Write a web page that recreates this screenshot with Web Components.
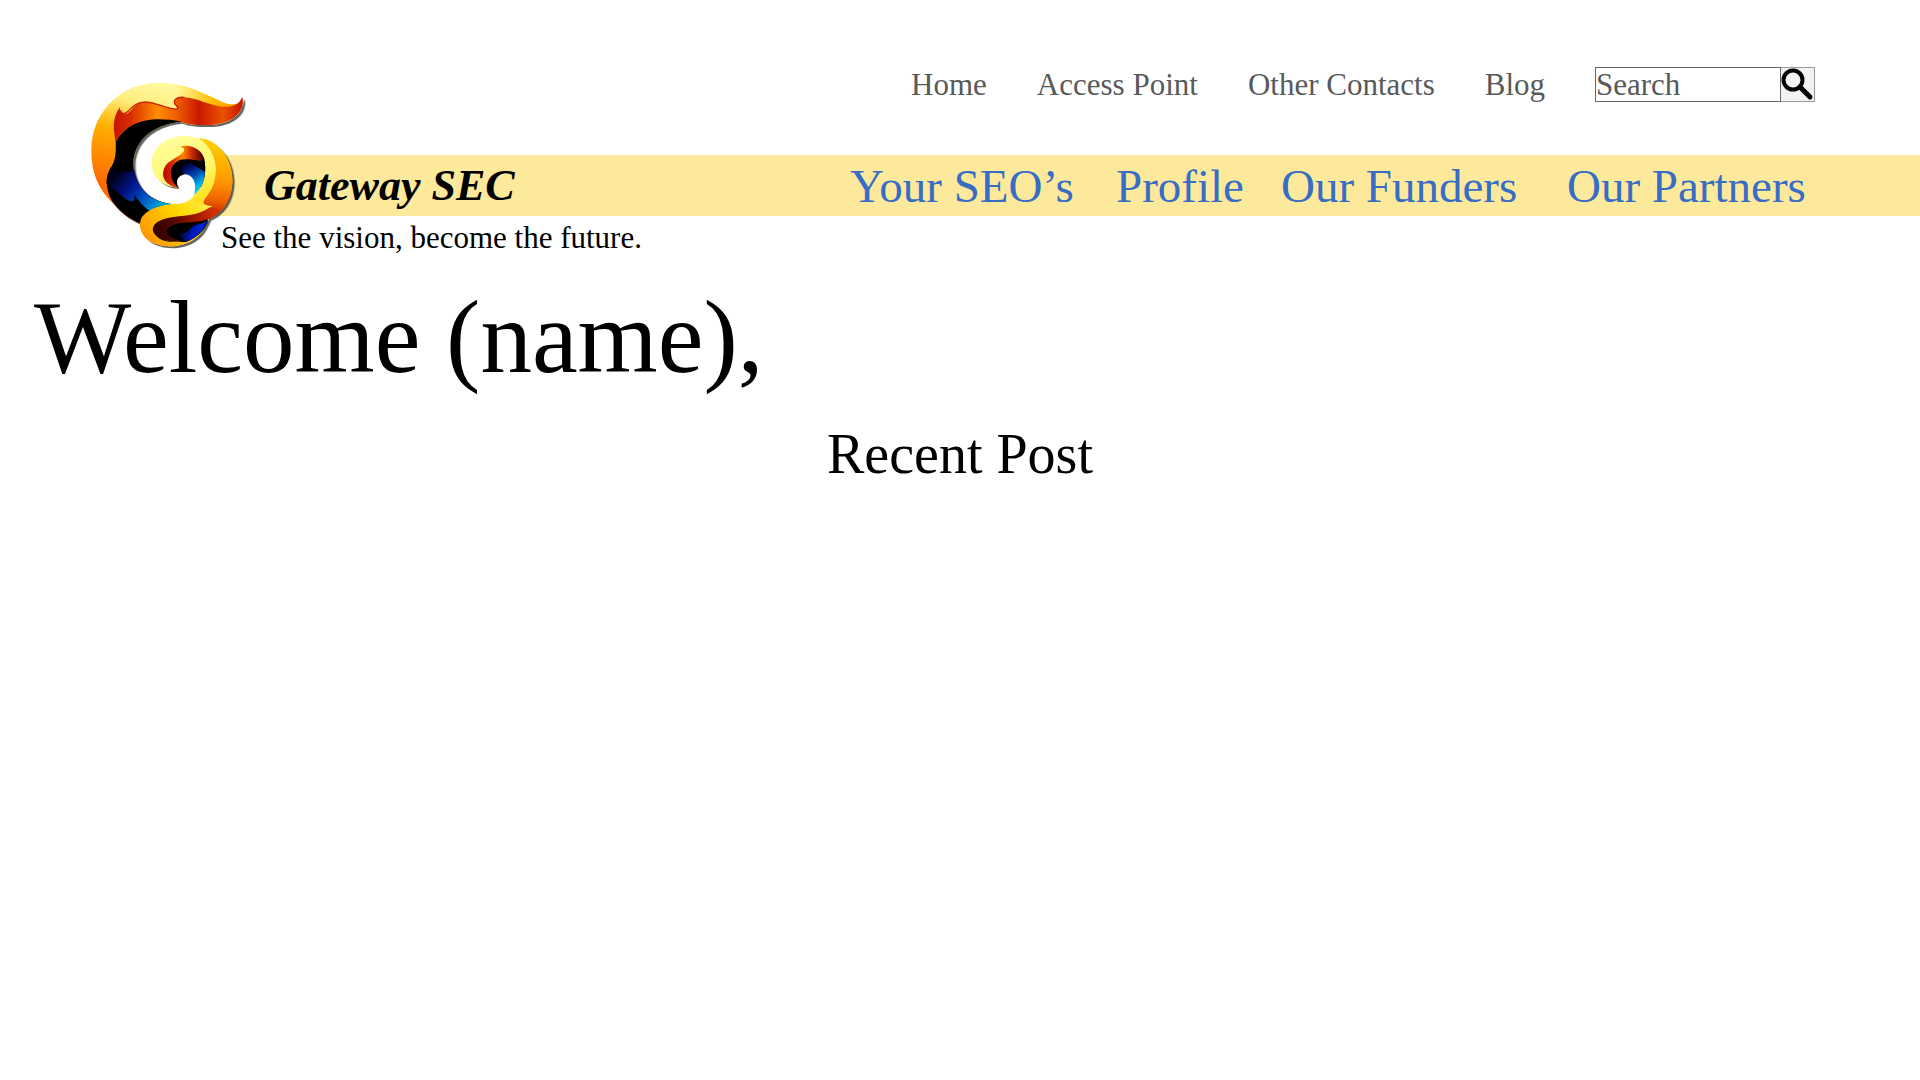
<!DOCTYPE html>
<html lang="en">
<head>
<meta charset="utf-8">
<title>Gateway SEC</title>
<style>
  body { margin: 0; background: #fff; color: #000; font-family: Baskerville, "Liberation Serif", serif; }
</style>
</head>
<body>
<gateway-page></gateway-page>

<script>
const define = (name, html) => customElements.define(name, class extends HTMLElement {
  constructor() {
    super();
    const t = document.createElement('template');
    t.innerHTML = html;
    this.attachShadow({ mode: 'open' }).append(t.content.cloneNode(true));
  }
});

define('gateway-logo', `
<style>
  :host { display: block; width: 180px; height: 190px; }
  svg { display: block; width: 100%; height: 100%; overflow: visible; }
</style>
<svg viewBox="0 0 540 570" role="img" aria-label="Gateway SEC logo">
  <defs>
    <filter id="sh" x="-10%" y="-10%" width="125%" height="125%"><feDropShadow dx="7" dy="6" stdDeviation="2" flood-color="#222" flood-opacity=".7"/></filter>
    <linearGradient id="outer" gradientUnits="userSpaceOnUse" x1="240" y1="40" x2="150" y2="360"><stop offset="0" stop-color="#fff9a0"/><stop offset=".22" stop-color="#ffee80"/><stop offset=".5" stop-color="#ffb000"/><stop offset="1" stop-color="#ff6a00"/></linearGradient>
    <linearGradient id="tip" gradientUnits="userSpaceOnUse" x1="285" y1="0" x2="480" y2="0"><stop offset="0" stop-color="#ffc800" stop-opacity="0"/><stop offset=".6" stop-color="#ffb800"/><stop offset="1" stop-color="#ff9000"/></linearGradient>
    <linearGradient id="flame" gradientUnits="userSpaceOnUse" x1="100" y1="0" x2="490" y2="0"><stop offset="0" stop-color="#c81200"/><stop offset=".13" stop-color="#d82c00"/><stop offset=".34" stop-color="#ff8c00"/><stop offset=".48" stop-color="#f06000"/><stop offset=".66" stop-color="#cb1800"/><stop offset=".84" stop-color="#ea5200"/><stop offset="1" stop-color="#c81000"/></linearGradient>
    <linearGradient id="blue" gradientUnits="userSpaceOnUse" x1="130" y1="290" x2="270" y2="410"><stop offset="0" stop-color="#00001a"/><stop offset=".3" stop-color="#001488"/><stop offset=".55" stop-color="#0048b8"/><stop offset=".8" stop-color="#0090d0"/><stop offset="1" stop-color="#00c8f0"/></linearGradient>
    <linearGradient id="cres" gradientUnits="userSpaceOnUse" x1="420" y1="210" x2="385" y2="450"><stop offset="0" stop-color="#ffd400"/><stop offset=".5" stop-color="#ff9800"/><stop offset=".75" stop-color="#ee6000"/><stop offset="1" stop-color="#b80c00"/></linearGradient>
    <linearGradient id="ring" gradientUnits="userSpaceOnUse" x1="260" y1="200" x2="360" y2="430"><stop offset="0" stop-color="#ffffa0"/><stop offset=".5" stop-color="#fff66c"/><stop offset="1" stop-color="#ffd800"/></linearGradient>
    <linearGradient id="tail" gradientUnits="userSpaceOnUse" x1="370" y1="350" x2="190" y2="490"><stop offset="0" stop-color="#fff45c"/><stop offset=".45" stop-color="#ffd800"/><stop offset="1" stop-color="#ff9800"/></linearGradient>
    <linearGradient id="core" gradientUnits="userSpaceOnUse" x1="250" y1="0" x2="375" y2="0"><stop offset="0" stop-color="#b80800"/><stop offset=".2" stop-color="#d42600"/><stop offset=".47" stop-color="#ff8800"/><stop offset=".65" stop-color="#d83400"/><stop offset=".82" stop-color="#8c1200"/><stop offset="1" stop-color="#300000"/></linearGradient>
    <linearGradient id="coreBlue" gradientUnits="userSpaceOnUse" x1="305" y1="280" x2="355" y2="365"><stop offset="0" stop-color="#000"/><stop offset=".25" stop-color="#001070"/><stop offset=".5" stop-color="#0048b0"/><stop offset=".78" stop-color="#00a8e0"/><stop offset="1" stop-color="#00d8ff"/></linearGradient>
    <linearGradient id="brown" gradientUnits="userSpaceOnUse" x1="220" y1="490" x2="400" y2="420"><stop offset="0" stop-color="#300000"/><stop offset=".35" stop-color="#500800"/><stop offset=".7" stop-color="#a41800"/><stop offset="1" stop-color="#d03000"/></linearGradient>
    <linearGradient id="tailBlue" gradientUnits="userSpaceOnUse" x1="300" y1="480" x2="375" y2="510"><stop offset="0" stop-color="#000018"/><stop offset=".45" stop-color="#0018b0"/><stop offset="1" stop-color="#0030ff"/></linearGradient>
  </defs>
  <g filter="url(#sh)">
    <path fill="url(#outer)" d="M487 80C483 104 460 108 432 98C380 75 320 38 236 38C120 38 34 130 34 240C34 325 66 366 98 398C122 430 154 450 183 461L280 402C212 398 160 348 160 282C160 220 208 164 300 155C330 165 360 166 390 165C450 162 498 130 487 80Z"/>
    <path fill="url(#cres)" d="M357 205C415 208 457 268 457 332C456 390 426 432 380 449L330 455L350 390L400 320Z"/>
    <path fill="url(#tail)" d="M182 450C185 424 225 410 275 402C320 396 350 378 366 340L400 350L396 408L385 450C370 488 346 518 292 527C234 536 188 510 182 478C178 467 179 457 182 450Z"/>
    <path fill="url(#ring)" d="M290 352C246 348 215 320 215 277C215 230 258 198 315 198C370 198 408 244 408 300L400 370L370 335L330 290L290 352Z"/>
  </g>
  <path fill="url(#tip)" d="M487 80C483 104 460 108 432 98C380 75 330 47 280 41L285 100L320 88C370 94 410 119 450 112C467 107 480 98 487 80Z"/>
  <path fill="url(#flame)" d="M120 111C94 147 101 181 107 216C140 155 210 140 300 155C330 165 360 166 390 165C450 162 498 130 487 80C480 102 458 112 430 110C386 107 350 83 312 82C287 80 278 91 286 104C296 118 291 119 276 116C245 111 215 87 184 97C157 105 148 139 130 132C119 127 119 118 120 111Z"/>
  <path fill="none" stroke="#c92200" stroke-width="4" stroke-linecap="round" d="M122 122C124 133 134 134 146 122C157 110 166 101 184 97C215 91 245 111 276 116C297 119 300 115 286 104C278 91 287 80 312 82"/>
  <path fill="#000" d="M107 216C145 150 215 138 305 155C208 164 160 220 160 282C160 348 212 398 280 402C235 411 200 424 183 461C154 450 122 430 98 396C82 370 74 333 86 306C99 281 110 270 107 216Z"/>
  <path fill="url(#blue)" d="M92 292C112 309 144 304 163 302C175 360 220 399 280 402C248 406 228 412 209 422C190 411 178 394 163 374C168 396 154 398 139 388C120 376 109 359 80 342C79 319 86 307 92 292Z"/>
  <path fill="url(#cres)" d="M357 205C415 208 457 268 457 332C456 390 426 432 380 449C345 456 310 456 290 446C330 432 370 430 397 408C369 409 362 398 378 381C414 342 427 256 357 205Z"/>
  <path fill="url(#tail)" d="M342 374C325 390 300 400 275 402C240 407 182 420 180 462C182 508 236 537 292 527C325 521 352 506 370 480L285 470L275 447C325 437 360 436 397 408C369 409 362 398 378 381L372 330Z"/>
  <path fill="url(#ring)" d="M357 205C427 256 414 342 378 381C366 392 366 398 370 404C340 400 335 385 342 374C366 350 375 330 375 300C373 248 350 218 310 227L300 199Z"/>
  <path fill="url(#brown)" d="M390 412C350 440 310 435 263 444C226 452 211 471 222 490C235 512 270 517 320 514L382 449C400 442 412 434 420 424C415 416 400 412 390 412Z"/>
  <path fill="#000" d="M382 448C350 463 300 450 268 472C244 493 284 508 305 514C270 520 240 513 227 495C243 512 285 518 316 516C350 505 374 480 384 455Z"/>
  <path fill="url(#tailBlue)" d="M382 450C364 467 345 459 333 474C320 490 304 493 283 491C300 496 311 506 318 516C352 503 373 478 382 450Z"/>
  <path fill="url(#core)" d="M300 230C325 222 360 232 372 263C380 300 373 330 364 350L297 354C258 348 241 322 253 294C262 272 289 268 309 247C317 237 311 232 300 230Z"/>
  <path fill="#000" d="M274 318C267 290 289 266 320 268C350 268 361 280 372 266C381 300 373 333 360 352L299 356C285 347 276 335 274 318Z"/>
  <path fill="url(#coreBlue)" d="M308 270C333 276 350 294 373 303C378 327 363 359 342 374L318 345L306 300Z"/>
  <path fill="#fff" d="M298 356C284 337 292 316 315 313C340 314 351 341 343 372C328 406 280 410 235 389C210 374 191 350 185 322C210 350 251 357 298 356Z"/>
</svg>`);

define('nav-link', `
<style>
  :host { display: block; white-space: nowrap; }
  a { color: inherit; text-decoration: none; }
</style>
<a href="#"><slot></slot></a>`);

define('search-box', `
<style>
  :host { display: block; }
  form { display: flex; height: 35px; margin: 0; }
  input { box-sizing: border-box; width: 186px; height: 35px; padding: 0; border: 1px solid #6b6466; border-radius: 0; background: #fff; color: #58595b; font: inherit; outline: 0; }
  input::placeholder { color: #58595b; opacity: 1; }
  button { box-sizing: border-box; width: 34px; height: 35px; padding: 0; border: 1px solid #a3979b; border-left: 0; background: #f3f2f3; }
  svg { display: block; width: 33px; height: 33px; }
</style>
<form role="search">
  <input type="text" placeholder="Search" aria-label="Search">
  <button type="button" aria-label="Submit search">
    <svg viewBox="0 0 33 33" fill="none" stroke="#000"><circle cx="12" cy="12" r="9.500" stroke-width="4"/><path d="M19 19L29 29" stroke-width="5" stroke-linecap="round"/></svg>
  </button>
</form>`);

define('site-header', `
<style>
  :host { display: block; position: relative; padding-top: 67px; }
  .top { display: flex; justify-content: flex-end; align-items: center; gap: 50px; height: 35px; padding-right: 105px; color: #58595b; font-size: 31px; line-height: 35px; }
  .links { display: flex; gap: 50px; }
  .band { display: flex; justify-content: space-between; align-items: center; height: 61px; margin: 53px 0 0 210px; padding: 0 105px 0 54px; background: #fde99b; }
  .brand { font-size: 44px; font-weight: bold; font-style: italic; line-height: 50px; white-space: nowrap; }
  .main { display: grid; grid-template-columns: 266px 165px 286px 248px; color: #376dc4; font-size: 47px; line-height: 54px; }
  gateway-logo { position: absolute; left: 80px; top: 70px; }
  .tag { margin: 4px 0 0 221px; font-size: 31px; line-height: 35px; }
</style>
<div class="top">
  <nav class="links" aria-label="Site">
    <nav-link>Home</nav-link><nav-link>Access Point</nav-link><nav-link>Other Contacts</nav-link><nav-link>Blog</nav-link>
  </nav>
  <search-box></search-box>
</div>
<div class="band">
  <div class="brand">Gateway SEC</div>
  <nav class="main" aria-label="Main">
    <nav-link>Your SEO’s</nav-link><nav-link>Profile</nav-link><nav-link>Our Funders</nav-link><nav-link>Our Partners</nav-link>
  </nav>
</div>
<gateway-logo></gateway-logo>
<p class="tag">See the vision, become the future.</p>`);

define('gateway-page', `
<style>
  :host { display: block; }
  h1, h2 { margin: 0; font-weight: normal; }
  h1 { padding: 26px 34px 0; font-size: 103px; line-height: 112px; }
  h2 { padding-top: 30px; font-size: 56px; line-height: 62px; text-align: center; }
</style>
<site-header></site-header>
<main>
  <h1>Welcome (name),</h1>
  <h2>Recent Post</h2>
</main>`);
</script>
</body>
</html>
